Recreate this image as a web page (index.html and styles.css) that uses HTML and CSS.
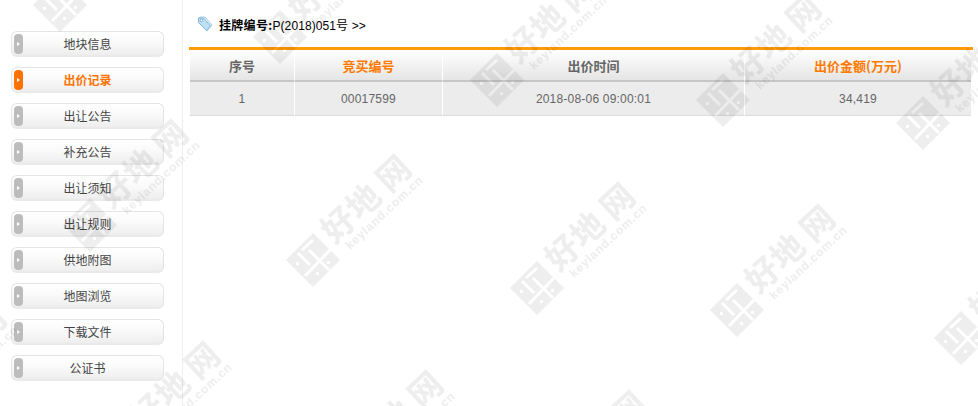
FILE: index.html
```html
<!DOCTYPE html>
<html lang="zh-CN">
<head>
<meta charset="utf-8">
<title>出价记录</title>
<link rel="stylesheet" href="styles.css">
</head>
<body>
<div class="page">
  <nav class="side">
    <a class="btn"><i class="knob"></i><span>地块信息</span></a>
    <a class="btn on"><i class="knob"></i><span>出价记录</span></a>
    <a class="btn"><i class="knob"></i><span>出让公告</span></a>
    <a class="btn"><i class="knob"></i><span>补充公告</span></a>
    <a class="btn"><i class="knob"></i><span>出让须知</span></a>
    <a class="btn"><i class="knob"></i><span>出让规则</span></a>
    <a class="btn"><i class="knob"></i><span>供地附图</span></a>
    <a class="btn"><i class="knob"></i><span>地图浏览</span></a>
    <a class="btn"><i class="knob"></i><span>下载文件</span></a>
    <a class="btn"><i class="knob"></i><span>公证书</span></a>
  </nav>
  <main class="main">
    <div class="title">
      <svg class="tag" width="16" height="16" viewBox="0 0 16 16">
        <path d="M3 1 L8 1 L15 9 L10 15 L2 7 Z" fill="#e4f1f9" stroke="#a9cfe6"/>
        <path d="M1.5 2 L6.5 2 L13.5 10 L9.5 14.5 L1.5 6.5 Z" fill="#bfdff2" stroke="#7db8dc"/>
        <circle cx="4.5" cy="4.5" r="1.3" fill="#fff" stroke="#6fa9cf" stroke-width=".8"/>
      </svg>
      <b>挂牌编号:</b><span>P(2018)051号 &gt;&gt;</span>
    </div>
    <table class="grid">
      <colgroup><col class="c1"><col class="c2"><col class="c3"><col class="c4"></colgroup>
      <thead>
        <tr><th>序号</th><th class="hot">竞买编号</th><th>出价时间</th><th class="hot">出价金额(万元)</th></tr>
      </thead>
      <tbody>
        <tr><td>1</td><td>00017599</td><td>2018-08-06 09:00:01</td><td>34,419</td></tr>
      </tbody>
    </table>
  </main>
</div>
<svg class="wm" width="978" height="406" viewBox="0 0 978 406" aria-hidden="true">
  <defs>
    <mask id="holes" maskUnits="userSpaceOnUse" x="-32" y="-32" width="64" height="64">
      <rect x="-32" y="-32" width="64" height="64" fill="#fff"/>
      <g fill="none" stroke="#000" stroke-width="3">
        <path d="M-15 -7 L-3 5"/>
        <path d="M-11 -10 L0 -20"/>
        <path d="M-8 16 L17 -10"/>
        <path d="M-4 -10 L16 10"/>
      </g>
      <g fill="#000">
        <rect x="-17" y="2" width="3" height="3"/>
        <rect x="14" y="1" width="3" height="3"/>
        <rect x="3" y="12" width="3" height="3"/>
      </g>
    </mask>
    <g id="mark">
      <g mask="url(#holes)">
        <path d="M0 -27 L27 0 L0 27 L-27 0 Z"/>
      </g>
      <text transform="translate(24,-37) rotate(-43)" class="cn">好</text>
      <text transform="translate(49,-60) rotate(-43)" class="cn">地</text>
      <text transform="translate(79,-88) rotate(-43)" class="cn">网</text>
      <text transform="translate(37,-10) rotate(-43)" class="en">keyland.com.cn</text>
    </g>
  </defs>
  <g class="wm-g">
    <use href="#mark" x="60" y="5"/>
    <use href="#mark" x="280" y="37"/>
    <use href="#mark" x="497" y="80"/>
    <use href="#mark" x="723" y="100"/>
    <use href="#mark" x="923" y="123"/>
    <use href="#mark" x="90" y="225"/>
    <use href="#mark" x="313" y="260"/>
    <use href="#mark" x="537" y="288"/>
    <use href="#mark" x="737" y="310"/>
    <use href="#mark" x="961" y="338"/>
    <use href="#mark" x="-92" y="410"/>
    <use href="#mark" x="122" y="447"/>
    <use href="#mark" x="345" y="476"/>
    <use href="#mark" x="548" y="496"/>
  </g>
</svg>
</body>
</html>
```
FILE: styles.css
```css
html, body { margin: 0; padding: 0; background: #fff; }
body {
  width: 978px;
  height: 406px;
  overflow: hidden;
  position: relative;
  font-family: "Liberation Sans", "Noto Sans CJK SC", sans-serif;
  font-size: 12px;
}
.page { display: flex; height: 406px; }
.side {
  width: 183px;
  flex: none;
  box-sizing: border-box;
  border-right: 1px solid #eee;
  margin-right: 6px;
  padding: 31px 0 0 11px;
  display: flex;
  flex-direction: column;
  gap: 10px;
}
.btn {
  width: 153px;
  height: 26px;
  box-sizing: border-box;
  border: 1px solid #e4e4e4;
  border-bottom-width: 2px;
  border-bottom-color: #eaeaea;
  border-radius: 6px;
  background: linear-gradient(#fff, #fafafa 45%, #eee);
  display: flex;
  align-items: center;
  justify-content: center;
  position: relative;
  color: #444;
  font-size: 12px;
  font-family: "Noto Sans CJK SC", sans-serif;
  line-height: 24px;
}
.knob {
  position: absolute;
  left: 2px;
  top: 2px;
  width: 9px;
  height: 20px;
  border-radius: 4px;
  background: #bcbcbc;
}
.knob::after {
  content: "";
  position: absolute;
  left: 3px;
  top: 8px;
  border-left: 3px solid #fff;
  border-top: 2px solid transparent;
  border-bottom: 2px solid transparent;
}
.btn.on { color: #ff7200; font-weight: 700; }
.btn.on .knob { background: #ff7200; }
.main { width: 784px; flex: none; }
.title {
  height: 47px;
  box-sizing: border-box;
  display: flex;
  align-items: center;
  padding: 1px 0 0 8px;
  color: #000;
  font-size: 12px;
}
.title span { letter-spacing: .1px; }
.tag { margin-right: 6px; flex: none; }
.title b {
  font-family: "Noto Sans CJK SC", sans-serif;
  font-weight: 700;
  letter-spacing: .3px;
}
.grid {
  border-top: 3px solid #ff9a0a;
  border-collapse: separate;
  border-spacing: 0;
  width: 784px;
  table-layout: fixed;
  padding: 0 2px 0 1px;
  box-sizing: border-box;
}
.c1 { width: 105px; }
.c2 { width: 148px; }
.c3 { width: 302px; }
.grid th {
  height: 30px;
  padding: 0;
  background: linear-gradient(#fff, #e5e5e5);
  border-bottom: 2px solid #c6c6c6;
  border-right: 1px solid #fff;
  color: #666;
  font-size: 13px;
  font-weight: 700;
  font-family: "Noto Sans CJK SC", sans-serif;
}
.grid th.hot { color: #ff7a00; }
.grid th:last-child, .grid td:last-child { border-right: 0; }
.grid td {
  height: 33px;
  padding: 0;
  background: #ececec;
  border-bottom: 1px solid #dcdcdc;
  border-right: 1px solid #fff;
  text-align: center;
  color: #666;
  font-size: 12px;
  letter-spacing: .2px;
}
.wm { position: absolute; left: 0; top: 0; pointer-events: none; }
.wm-g { fill: #000; stroke: #000; stroke-width: 0; opacity: .07; }
.cn {
  font-family: "Noto Sans CJK SC", sans-serif;
  font-size: 33px;
  font-weight: 700;
  text-anchor: middle;
  dominant-baseline: central;
  stroke-width: .3px;
}
.en {
  font-size: 12px;
  font-weight: 700;
  font-family: "Liberation Sans", sans-serif;
  letter-spacing: .8px;
  stroke-width: .2px;
}
```
